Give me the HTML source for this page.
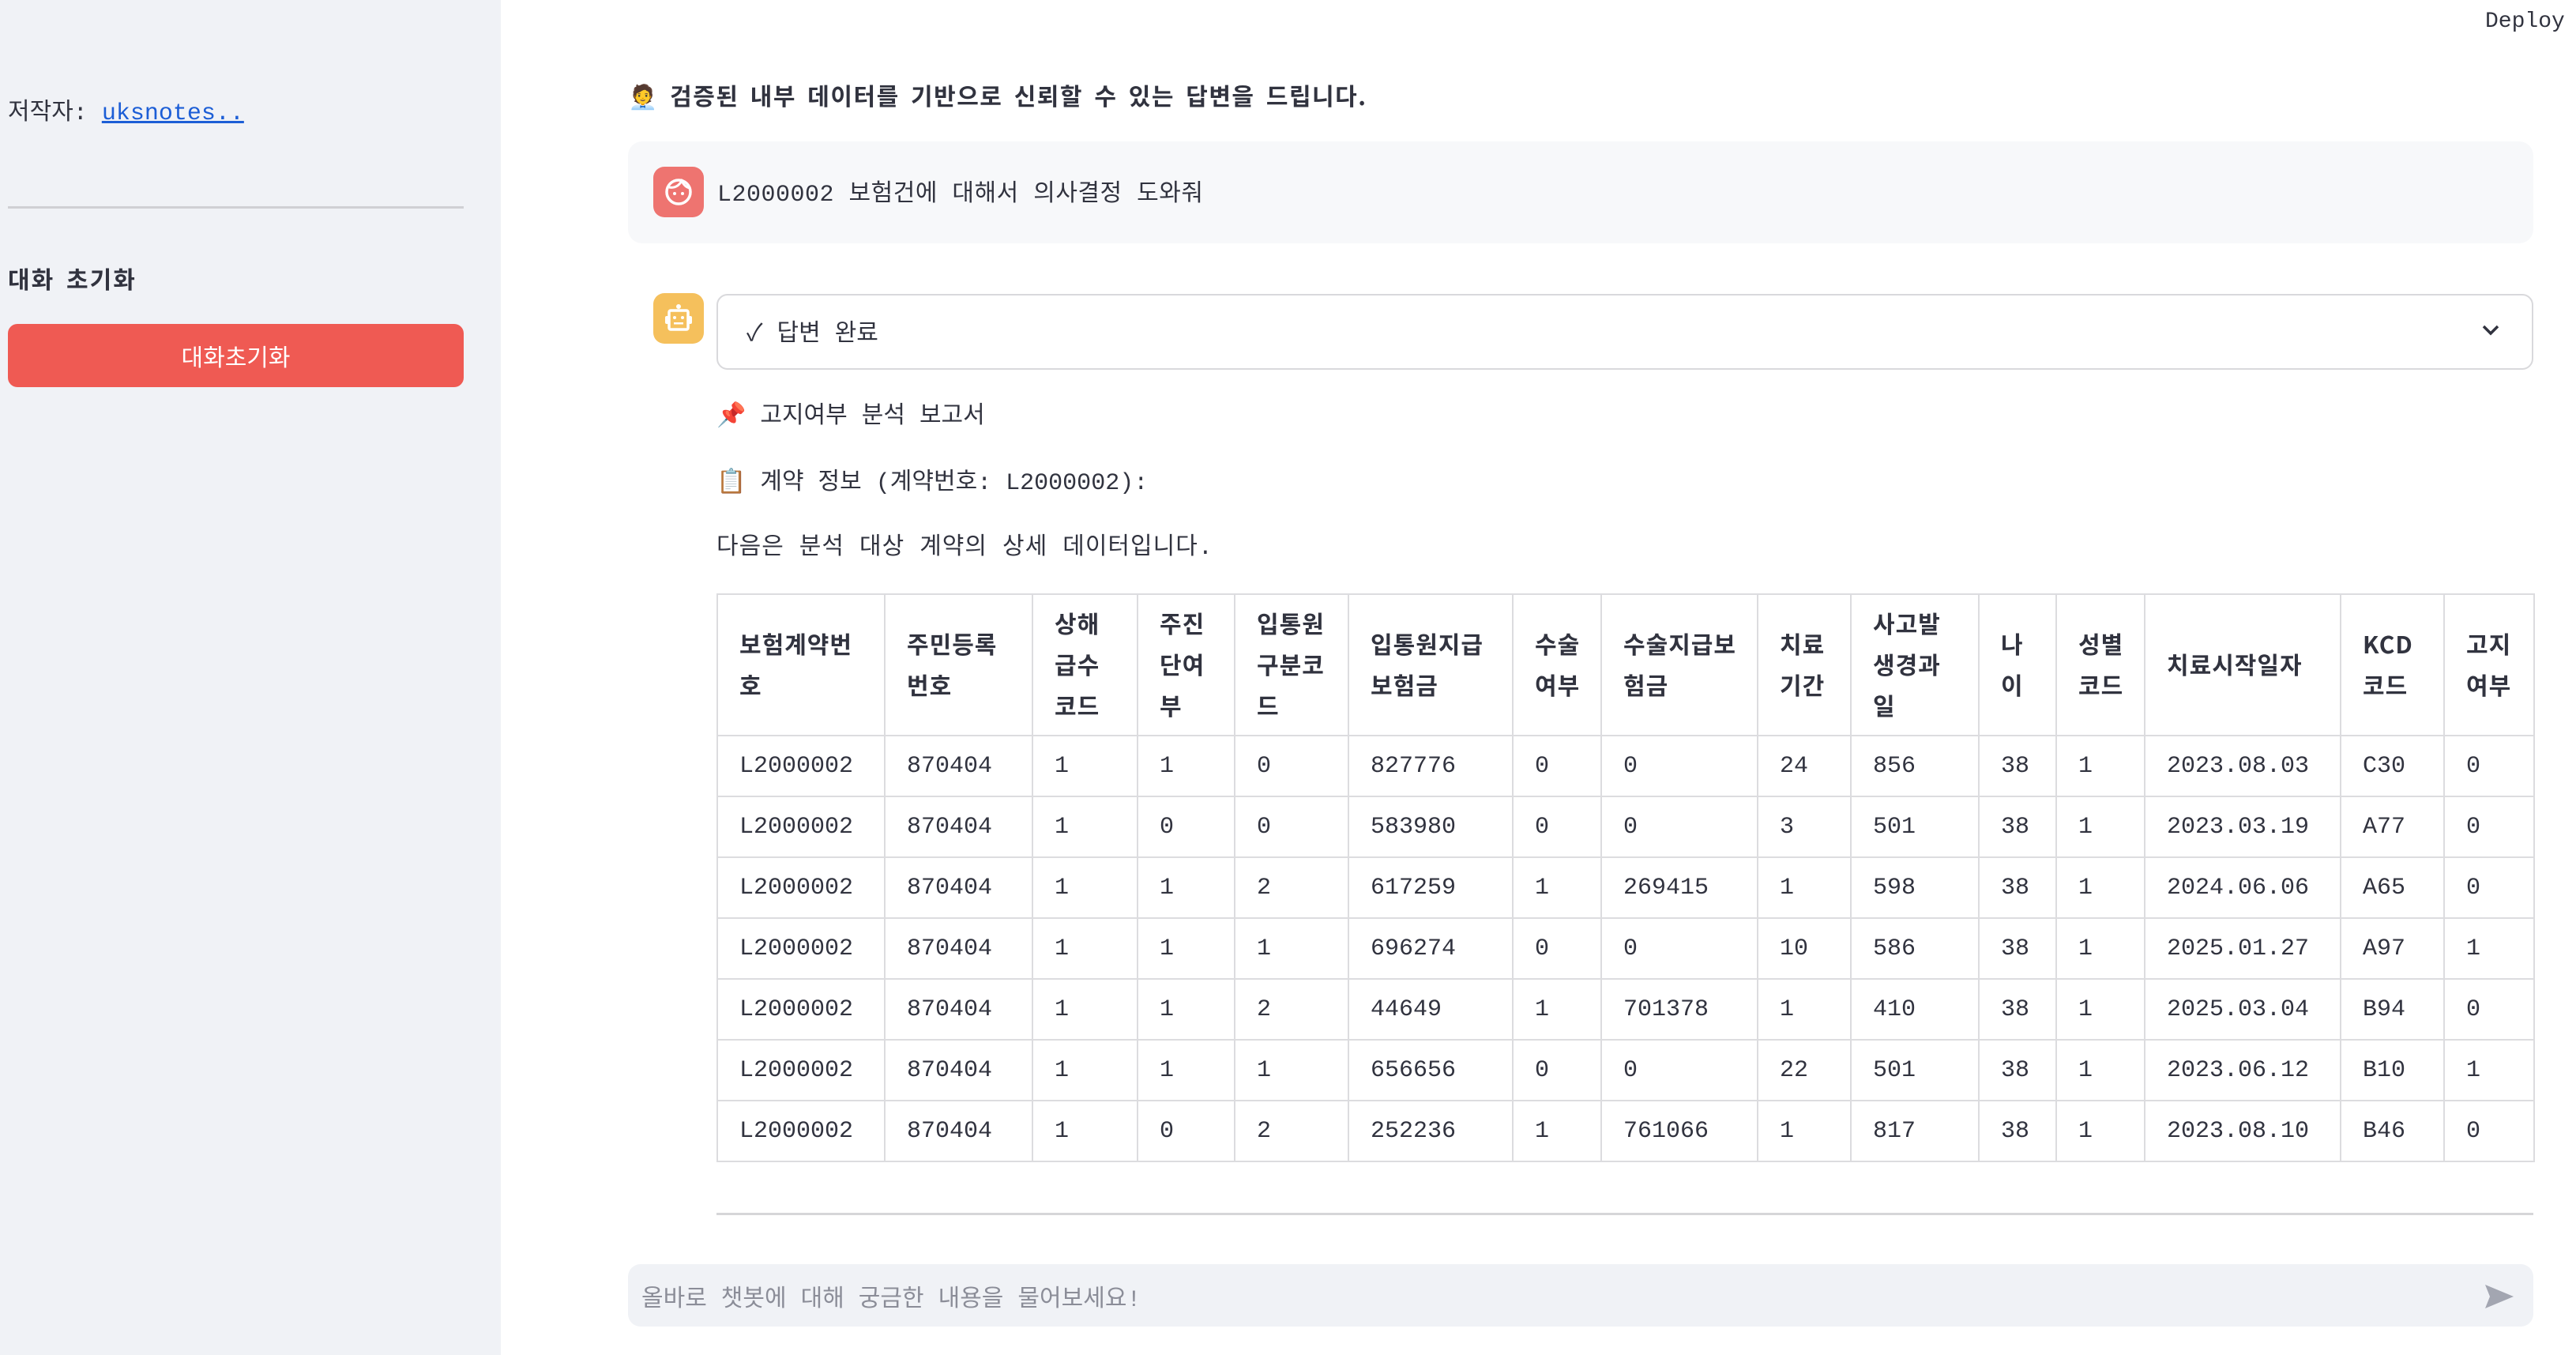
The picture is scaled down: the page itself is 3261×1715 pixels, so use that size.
<!DOCTYPE html>
<html><head><meta charset="utf-8">
<style>
*{box-sizing:border-box;margin:0;padding:0}
body{width:3261px;height:1715px;overflow:hidden;background:#fff;color:#31333f;font-family:"Liberation Mono","Noto Sans CJK KR",monospace;font-size:30px;position:relative}
.abs{position:absolute}
.side{left:0;top:0;width:634px;height:1715px;background:#f0f2f6}
table{position:absolute;left:907px;top:751px;border-collapse:collapse;table-layout:fixed;width:2300px}
td,th{border:2px solid #dcdcdf;padding:0 0 0 27px;text-align:left;vertical-align:middle;font-size:30px;line-height:52px;white-space:nowrap}
th{height:179px;font-weight:bold;font-family:"Noto Sans CJK KR",sans-serif;font-size:30px;letter-spacing:1px;padding-bottom:4px}
td{height:77px}
</style></head><body>
<div class="abs side"></div>
<div class="abs" style="left:10px;top:116px;">저작자: <span style="color:#1c5ed6;text-decoration:underline">uksnotes..</span></div>
<div class="abs" style="left:10px;top:261px;width:577px;height:3px;background:#d0d0d4"></div>
<div class="abs" style="left:10px;top:330px;font-weight:bold;font-family:'Noto Sans CJK KR',sans-serif;letter-spacing:2px;word-spacing:6px">대화 초기화</div>
<div class="abs" style="left:10px;top:410px;width:577px;height:80px;background:#ef5a53;border-radius:12px;color:#fff;text-align:center;line-height:80px;font-family:'Noto Sans CJK KR',sans-serif">대화초기화</div>
<div class="abs" style="left:3146px;top:12px;font-size:28px">Deploy</div>
<div class="abs" style="left:795px;top:98px;font-weight:bold;font-family:'Noto Sans CJK KR',sans-serif;letter-spacing:1.5px;word-spacing:6px">🧑‍💼 검증된 내부 데이터를 기반으로 신뢰할 수 있는 답변을 드립니다.</div>
<div class="abs" style="left:795px;top:179px;width:2412px;height:129px;background:#f7f8fa;border-radius:18px"></div>
<div class="abs" style="left:827px;top:211px;width:64px;height:64px;background:#ee7470;border-radius:14px">
<svg width="64" height="64" viewBox="0 0 64 64"><circle cx="32" cy="32" r="15" fill="none" stroke="#fff" stroke-width="3.5"/><path d="M20 26 Q30 28 36 18 Q40 26 46 27" fill="none" stroke="#fff" stroke-width="3"/><circle cx="27" cy="34" r="2" fill="#fff"/><circle cx="37" cy="34" r="2" fill="#fff"/></svg></div>
<div class="abs" style="left:908px;top:219px;letter-spacing:0.5px">L2000002 보험건에 대해서 의사결정 도와줘</div>
<div class="abs" style="left:827px;top:371px;width:64px;height:64px;background:#f5c05c;border-radius:14px">
<svg width="64" height="64" viewBox="0 0 64 64"><rect x="20" y="22" width="24" height="24" rx="2" fill="none" stroke="#fff" stroke-width="3.5"/><circle cx="32" cy="17" r="3" fill="#fff"/><rect x="15" y="29" width="5" height="10" rx="2" fill="#fff"/><rect x="44" y="29" width="5" height="10" rx="2" fill="#fff"/><circle cx="27" cy="31" r="2" fill="#fff"/><circle cx="37" cy="31" r="2" fill="#fff"/><rect x="26" y="37" width="12" height="2.5" fill="#fff"/></svg></div>
<div class="abs" style="left:907px;top:372px;width:2300px;height:96px;border:2px solid #d9d9dc;border-radius:14px"></div>
<div class="abs" style="left:945px;top:396px">✓ 답변 완료</div>
<svg class="abs" style="left:3140px;top:408px" width="26" height="20" viewBox="0 0 26 20"><path d="M4 5 L13 14 L22 5" fill="none" stroke="#31333f" stroke-width="3.5"/></svg>
<div class="abs" style="left:907px;top:500px">📌 고지여부 분석 보고서</div>
<div class="abs" style="left:907px;top:584px">📋 계약 정보 (계약번호: L2000002):</div>
<div class="abs" style="left:907px;top:666px;letter-spacing:1px">다음은 분석 대상 계약의 상세 데이터입니다.</div>
<table>
<colgroup><col style="width:212px"><col style="width:187px"><col style="width:133px"><col style="width:123px"><col style="width:144px"><col style="width:208px"><col style="width:112px"><col style="width:198px"><col style="width:118px"><col style="width:162px"><col style="width:98px"><col style="width:112px"><col style="width:248px"><col style="width:131px"><col style="width:114px"></colgroup>
<tr><th>보험계약번<br>호</th><th>주민등록<br>번호</th><th>상해<br>급수<br>코드</th><th>주진<br>단여<br>부</th><th>입통원<br>구분코<br>드</th><th>입통원지급<br>보험금</th><th>수술<br>여부</th><th>수술지급보<br>험금</th><th>치료<br>기간</th><th>사고발<br>생경과<br>일</th><th>나<br>이</th><th>성별<br>코드</th><th>치료시작일자</th><th>KCD<br>코드</th><th>고지<br>여부</th></tr>
<tr><td>L2000002</td><td>870404</td><td>1</td><td>1</td><td>0</td><td>827776</td><td>0</td><td>0</td><td>24</td><td>856</td><td>38</td><td>1</td><td>2023.08.03</td><td>C30</td><td>0</td></tr>
<tr><td>L2000002</td><td>870404</td><td>1</td><td>0</td><td>0</td><td>583980</td><td>0</td><td>0</td><td>3</td><td>501</td><td>38</td><td>1</td><td>2023.03.19</td><td>A77</td><td>0</td></tr>
<tr><td>L2000002</td><td>870404</td><td>1</td><td>1</td><td>2</td><td>617259</td><td>1</td><td>269415</td><td>1</td><td>598</td><td>38</td><td>1</td><td>2024.06.06</td><td>A65</td><td>0</td></tr>
<tr><td>L2000002</td><td>870404</td><td>1</td><td>1</td><td>1</td><td>696274</td><td>0</td><td>0</td><td>10</td><td>586</td><td>38</td><td>1</td><td>2025.01.27</td><td>A97</td><td>1</td></tr>
<tr><td>L2000002</td><td>870404</td><td>1</td><td>1</td><td>2</td><td>44649</td><td>1</td><td>701378</td><td>1</td><td>410</td><td>38</td><td>1</td><td>2025.03.04</td><td>B94</td><td>0</td></tr>
<tr><td>L2000002</td><td>870404</td><td>1</td><td>1</td><td>1</td><td>656656</td><td>0</td><td>0</td><td>22</td><td>501</td><td>38</td><td>1</td><td>2023.06.12</td><td>B10</td><td>1</td></tr>
<tr><td>L2000002</td><td>870404</td><td>1</td><td>0</td><td>2</td><td>252236</td><td>1</td><td>761066</td><td>1</td><td>817</td><td>38</td><td>1</td><td>2023.08.10</td><td>B46</td><td>0</td></tr>
</table>
<div class="abs" style="left:907px;top:1535px;width:2300px;height:3px;background:#d6d6d8"></div>
<div class="abs" style="left:795px;top:1600px;width:2412px;height:79px;background:#f0f2f6;border-radius:16px"></div>
<div class="abs" style="left:812px;top:1618px;color:#8b8d98">올바로 챗봇에 대해 궁금한 내용을 물어보세요!</div>
<svg class="abs" style="left:3144px;top:1624px" width="40" height="34" viewBox="0 0 40 34"><path d="M2 2 L38 17 L2 32 L8 17 Z" fill="#a3a6b1"/></svg>
</body></html>
